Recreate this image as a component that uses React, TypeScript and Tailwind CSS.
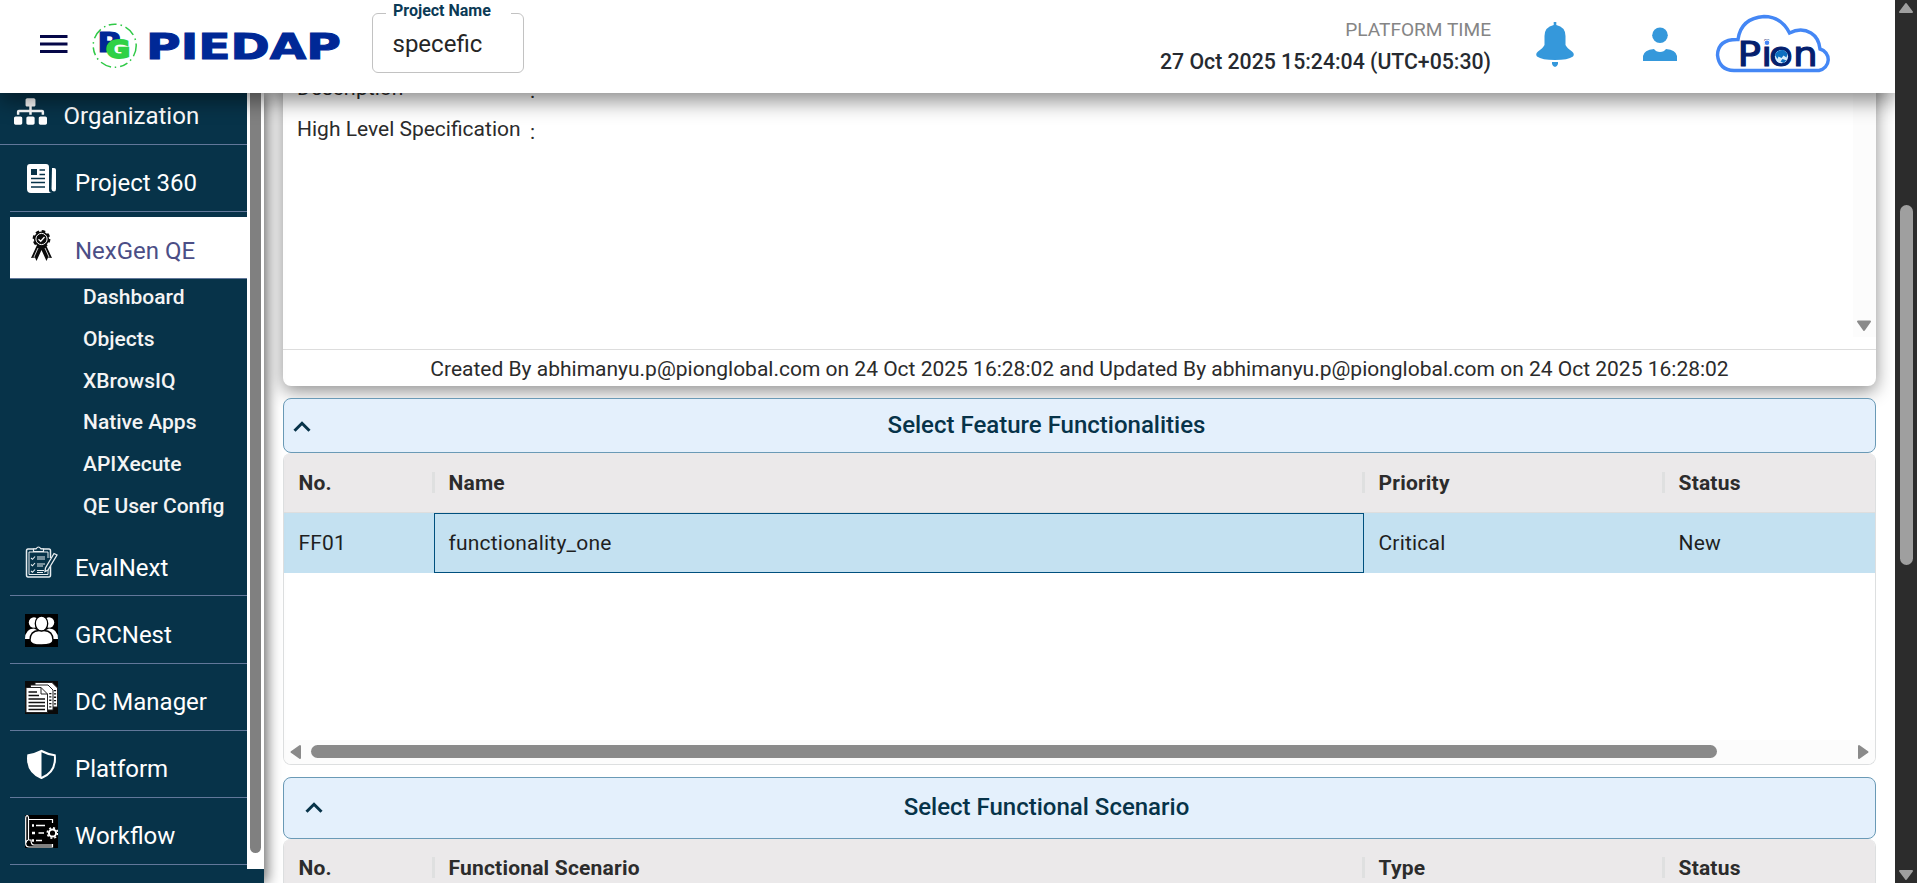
import React from "react";
import { FaSitemap } from "react-icons/fa";

function PiedapLogo() {
  return (
    <svg width="250" height="46" viewBox="0 0 250 46" className="ml-6 shrink-0">
      <circle cx="22.7" cy="22.7" r="21.5" fill="none" stroke="#2fc946" strokeWidth="1.5" strokeDasharray="11 4 1.5 3.5 8 4 1.5 3.8" />
      <text x="5.5" y="29" fontFamily="DejaVu Sans" fontWeight="700" fontSize="26" fill="#002896" stroke="#002896" strokeWidth="1.2" textLength="23" lengthAdjust="spacingAndGlyphs">P</text>
      <text x="14" y="35.4" fontFamily="DejaVu Sans" fontWeight="700" fontSize="24" fill="#2fd146" stroke="#2fd146" strokeWidth="2" textLength="24" lengthAdjust="spacingAndGlyphs">G</text>
      <text x="54" y="35.8" fontFamily="DejaVu Sans" fontWeight="700" fontSize="35" fill="#002896" stroke="#002896" strokeWidth="1" textLength="195" lengthAdjust="spacingAndGlyphs">PIEDAP</text>
    </svg>
  );
}

function PionLogo() {
  return (
    <svg width="118" height="60" viewBox="0 0 118 60" className="shrink-0">
      <path d="M19 56.5 H104 A11 11 0 0 0 105 35 Q104 24 96 19 Q86 13 74.5 19 Q66 2.5 49 2.5 Q26 4 23 25.5 Q3 25 2.5 41 Q4 56 19 56.5 Z" fill="#fff" stroke="#4487f5" strokeWidth="3.4" />
      <text x="19.9 41 47.9 69" y="52.4" transform="scale(1.13 1)" fontFamily="DejaVu Sans" fontWeight="400" fontSize="34.5" fill="#04206e" stroke="#04206e" strokeWidth="1.1">Pion</text>
      <circle cx="52" cy="28.6" r="3.2" fill="#fff" />
      <circle cx="52" cy="28.8" r="2.3" fill="#4487f5" />
      <circle cx="66.5" cy="42.6" r="6.6" fill="#d8ecfa" />
      <path d="M60 41 Q62 35.5 68.5 36 L72.5 39.5 L71.5 43.5 L68.5 41.5 L66.5 44 L63.5 42.5 L62.5 45Z M67.5 45 L71.5 46.5 L68.5 49 L65.5 47.5Z" fill="#0d6fc0" />
    </svg>
  );
}

function NewsIcon() {
  return (
    <svg width="33" height="33" viewBox="0 0 33 33">
      <path d="M5 2 H21 Q24 2 24 5 V28 Q24 31 27 31 H6 Q2 31 2 27 V5 Q2 2 5 2Z" fill="#fff" />
      <path d="M27 6 H29 Q31 6 31 8 V27 Q31 29.5 29 29.5 Q26.5 29 26.5 27Z" fill="#fff" />
      <path d="M6 7 H12 V13 H6Z" fill="#073349" />
      <path d="M14.5 8 H20 M14.5 12.5 H20 M6 16.5 H20 M6 20.5 H20 M6 25 H20" stroke="#073349" strokeWidth="1.7" />
    </svg>
  );
}

function AwardIcon() {
  return (
    <svg width="33" height="33" viewBox="0 0 33 33">
      <path d="M12 16 L6 29 L10 28.5 L11.5 32 L16.5 21 L21.5 32 L23 28.5 L27 29 L21 16Z" fill="#0a0a0a" />
      <path d="M13 19 L9 28 M20 19 L24 28" stroke="#fff" strokeWidth="0.8" />
      <circle cx="16.5" cy="10" r="7.6" fill="#0a0a0a" stroke="#0a0a0a" strokeWidth="2.6" strokeDasharray="3.4 2.57" />
      <circle cx="16.5" cy="10" r="5.6" fill="none" stroke="#fff" strokeWidth="1" />
      <path d="M13.5 10.3 L15.7 12.3 L19.5 8" fill="none" stroke="#fff" strokeWidth="1.3" />
    </svg>
  );
}

function ChecklistIcon() {
  return (
    <svg width="33" height="33" viewBox="0 0 33 33" fill="none" stroke="#e8edf0">
      <path d="M25.5 12 V5 Q25.5 3 24 3 H3 Q1.5 3 1.5 5 V29 Q1.5 31 3 31 H24 Q25.5 31 25.5 29 V20" strokeWidth="1.5" />
      <path d="M23 12 V6 H4 V28.5 H23 V24" strokeWidth="1" />
      <path d="M8.5 5.5 V3 H11 Q13.5 -1 16 3 H18.5 V5.5Z" fill="#073349" strokeWidth="1.2" />
      <path d="M6 12 L7.5 13.3 L10 10.5 M6 18.5 L7.5 19.8 L10 17 M6 25 L7.5 26.3 L10 23.5 M12 11 H20 M12 13 H20 M12 18 H20 M12 20 H18 M12 24.5 H19 M12 26.5 H18" strokeWidth="1.1" />
      <path d="M29 7.5 L32 9 L23 24 L20 25.5 L20.5 22Z" fill="#073349" strokeWidth="1.3" />
    </svg>
  );
}

function PeopleIcon() {
  return (
    <svg width="33" height="33" viewBox="0 0 33 33">
      <rect width="33" height="33" fill="#000" />
      <g fill="#fff">
        <circle cx="9" cy="8.5" r="5.2" />
        <circle cx="24" cy="8.5" r="5.2" />
        <path d="M0 25 Q0 15 9 14.5 L14 17 V25Z M33 25 Q33 15 24 14.5 L19 17 V25Z" />
      </g>
      <g fill="#fff" stroke="#000" strokeWidth="1.3">
        <path d="M5 26 Q5 17 14 16.5 H19 Q28 17 28 26 Q28 31 16.5 31 Q5 31 5 26Z" />
        <ellipse cx="16.5" cy="9.5" rx="6.2" ry="7.5" />
      </g>
    </svg>
  );
}

function DocumentsIcon() {
  return (
    <svg width="33" height="33" viewBox="0 0 33 33">
      <rect width="33" height="33" fill="#0a0a0a" />
      <path d="M10 1.5 H27 L32.5 7 V26 H10Z" fill="#fff" stroke="#222" />
      <path d="M5.5 4 H23 L28 9 V29 H5.5Z" fill="#fff" stroke="#222" />
      <path d="M1 6.5 H16 L22.5 13 V31.5 H1Z" fill="#fff" stroke="#222" />
      <path d="M16 6.5 V13 H22.5" fill="none" stroke="#222" />
      <path d="M3.5 11 H12 M3.5 14.5 H14 M3.5 18 H20 M3.5 21.5 H20 M3.5 25 H20 M3.5 28.5 H20" stroke="#111" strokeWidth="1.3" />
      <path d="M25.3 12 V27 M30 9 V25" stroke="#111" strokeWidth="2.2" strokeDasharray="1.3 2" />
    </svg>
  );
}

function ShieldIcon() {
  return (
    <svg width="33" height="33" viewBox="0 0 33 33">
      <path d="M16.5 3 Q22 6 29.8 7.3 Q31.5 24 16.5 30 Q1.5 24 3.2 7.3 Q11 6 16.5 3Z" fill="none" stroke="#fff" strokeWidth="2" />
      <path d="M16.5 3 V30 Q1.5 24 3.2 7.3 Q11 6 16.5 3Z" fill="#fff" />
    </svg>
  );
}

function WorkflowIcon() {
  return (
    <svg width="33" height="33" viewBox="0 0 33 33" fill="none" stroke="#fff">
      <rect width="33" height="33" fill="#000" stroke="none" />
      <path d="M3.5 25 V3 Q3.5 0.7 2 0.7 Q0.7 1 0.7 3 V29 Q1 32 4 32 H27.5 V29 M3.5 25 Q1 25.5 1 28 M4 25 H6 Q6 30 9 30 H27 M4 4.5 H27.5 V8" strokeWidth="1.2" />
      <path d="M11 10.5 H20 M13.5 18 H19 M11 25.5 H17" strokeWidth="1.7" />
      <path d="M7 10.5 H9 M7 18 H10 M7 25.5 H9" strokeWidth="2.6" />
      <circle cx="27.5" cy="18" r="3.6" strokeWidth="2" />
      <circle cx="27.5" cy="18" r="5.2" strokeWidth="1.6" strokeDasharray="2 2.08" />
    </svg>
  );
}

function NavItem({ icon, label, active = false }: { icon: React.ReactNode; label: string; active?: boolean }) {
  return (
    <div className="ml-2.5 flex h-[67.2px] shrink-0 flex-col justify-end border-b border-[#62789a]">
      <div className={active ? "flex h-[61px] bg-white pl-[15px] text-[#4b4e86]" : "flex h-[61px] pl-[15px] text-white"}>
        <div className="mt-[12px] flex h-[33px] w-[33px] items-center justify-center">{icon}</div>
        <div className="ml-[17px] mt-[17.3px] text-[24px] leading-[32px]">{label}</div>
      </div>
    </div>
  );
}

const subItems = ["Dashboard", "Objects", "XBrowsIQ", "Native Apps", "APIXecute", "QE User Config"];

function Sidebar() {
  return (
    <aside className="z-10 flex w-[264px] shrink-0 flex-col bg-[#073349] shadow-[3px_0_13px_rgba(0,0,0,0.6)]">
      <div className="flex h-[776px] shrink-0">
        <nav className="flex w-[247px] flex-col">
          <div className="flex h-[52px] shrink-0 border-b border-[#62789a] pl-[14px] text-white">
            <FaSitemap className="mt-[2px]" size={33} />
            <span className="ml-[16.5px] mt-[7px] text-[24px] leading-[32px]">Organization</span>
          </div>
          <NavItem icon={<NewsIcon />} label="Project 360" />
          <NavItem icon={<AwardIcon />} label="NexGen QE" active />
          <div className="flex h-[249.8px] shrink-0 flex-col pl-[83px]">
            {subItems.map((s) => (
              <div key={s} className="h-[41.7px] shrink-0 pt-[3px] text-[21px] font-medium leading-[30px] text-[#f4f4f4]">{s}</div>
            ))}
          </div>
          <NavItem icon={<ChecklistIcon />} label="EvalNext" />
          <NavItem icon={<PeopleIcon />} label="GRCNest" />
          <NavItem icon={<DocumentsIcon />} label="DC Manager" />
          <NavItem icon={<ShieldIcon />} label="Platform" />
          <NavItem icon={<WorkflowIcon />} label="Workflow" />
        </nav>
        <div className="w-[17px] bg-white pl-[3px]">
          <div className="h-[760px] w-[11px] rounded-b-full bg-[#808080]" />
        </div>
      </div>
    </aside>
  );
}

function SectionBar({ title, tall = false }: { title: string; tall?: boolean }) {
  return (
    <div className={tall
      ? "mt-3 flex h-[62px] shrink-0 items-center rounded-lg border border-[#6a9ab6] bg-[#e4f0fc] pb-[3px] pl-[21px] pr-[21px]"
      : "mt-3 flex h-[55px] shrink-0 items-center rounded-lg border border-[#6a9ab6] bg-[#e4f0fc] pl-[9px] pr-[9px]"}>
      <svg width="18" height="12" viewBox="0 0 18 12" className="mt-[2px] shrink-0">
        <path d="M1.5 9.8 L9 2.3 L16.5 9.8" fill="none" stroke="#073349" strokeWidth="3" />
      </svg>
      <div className={tall
        ? "flex-1 pr-[84px] pt-[1px] text-center text-[24px] font-medium leading-[30px] text-[#073349]"
        : "flex-1 pb-[1px] pr-[84px] text-center text-[24px] font-medium leading-[30px] text-[#073349]"}>{title}</div>
    </div>
  );
}

function HeaderRow({ cells }: { cells: string[] }) {
  return (
    <div className="grid h-[60px] shrink-0 grid-cols-[150px_930px_300px_1fr] items-center border-b border-[#dedede] bg-[#ebe9ea] text-[21px] font-bold tracking-[0.2px] text-[#2c2c2c]">
      {cells.map((c, i) => (
        <div key={c} className="flex h-[22px] items-center justify-between pl-[14.5px]">
          <span className="pt-[2px]">{c}</span>
          {i < 3 && <span className="-mr-[1px] h-[21px] w-[3px] bg-[#dfe0e0]" />}
        </div>
      ))}
    </div>
  );
}

function Main() {
  return (
    <main className="flex min-w-0 flex-1 flex-col overflow-hidden bg-white pl-[19px] pr-[19px]">
      <section className="-mt-5 flex h-[313px] shrink-0 flex-col rounded-lg bg-white text-[21px] text-[#2b2b2b] shadow-[0_5px_18px_rgba(0,0,0,0.45)]">
        <div className="flex h-[277px] shrink-0 border-b border-[#dddddd]">
          <div className="flex-1 pl-[14px]">
            <div className="flex h-[41px] leading-[30px]">
              <span className="w-[233px]">Description</span>
              <span className="mt-[3px]">:</span>
            </div>
            <div className="flex h-[40px] leading-[30px]">
              <span className="w-[233px]">High Level Specification</span>
              <span className="mt-[3px]">:</span>
            </div>
          </div>
          <div className="mb-3 flex w-[23px] flex-col items-center justify-end bg-[#fcfcfc] pb-[5px] pr-[1px]">
            <svg width="16" height="12" viewBox="0 0 16 12">
              <path d="M2 1.5 H14 L8 10Z" fill="#8a8a8a" stroke="#8a8a8a" strokeWidth="2" strokeLinejoin="round" />
            </svg>
          </div>
        </div>
        <div className="flex flex-1 items-center justify-center pt-[4px]">
          <span>Created By abhimanyu.p@pionglobal.com on 24 Oct 2025 16:28:02 and Updated By abhimanyu.p@pionglobal.com on 24 Oct 2025 16:28:02</span>
        </div>
      </section>

      <SectionBar title="Select Feature Functionalities" />
      <section className="flex h-[312px] shrink-0 flex-col overflow-hidden rounded-lg border border-t-0 border-[#dddfe0]">
        <HeaderRow cells={["No.", "Name", "Priority", "Status"]} />
        <div className="grid h-[60px] shrink-0 grid-cols-[150px_930px_300px_1fr] bg-[#c4e1f1] text-[21px] leading-[60px] tracking-[0.2px] text-[#1f1f1f]">
          <span className="pl-[14.5px]">FF01</span>
          <span className="border border-[#00507e] pl-[13.5px] leading-[58px]">functionality_one</span>
          <span className="pl-[14.5px]">Critical</span>
          <span className="pl-[14.5px]">New</span>
        </div>
        <div className="flex-1" />
        <div className="flex h-[24px] shrink-0 items-center bg-[#fcfcfc] pb-[1px] pl-[6px] pr-[6px]">
          <svg width="12" height="16" viewBox="0 0 12 16">
            <path d="M10 2 V14 L1.5 8Z" fill="#8a8a8a" stroke="#8a8a8a" strokeWidth="2" strokeLinejoin="round" />
          </svg>
          <div className="ml-[9px] h-[13px] w-[1406px] rounded-full bg-[#8a8a8a]" />
          <div className="flex-1" />
          <svg width="12" height="16" viewBox="0 0 12 16">
            <path d="M2 2 V14 L10.5 8Z" fill="#8a8a8a" stroke="#8a8a8a" strokeWidth="2" strokeLinejoin="round" />
          </svg>
        </div>
      </section>

      <SectionBar title="Select Functional Scenario" tall />
      <section className="flex h-[200px] shrink-0 flex-col overflow-hidden rounded-lg border border-t-0 border-[#dddfe0]">
        <div className="-mt-[1px]">
          <HeaderRow cells={["No.", "Functional Scenario", "Type", "Status"]} />
        </div>
      </section>
    </main>
  );
}

function TopBar() {
  return (
    <header className="z-20 flex h-[93px] shrink-0 items-start bg-white shadow-[0_8px_20px_rgba(0,0,0,0.45)]">
      <svg width="28" height="20" viewBox="0 0 28 20" className="ml-10 mt-[34px] shrink-0">
        <path d="M0 2.5 H27.5 M0 10 H27.5 M0 17.5 H27.5" stroke="#050748" strokeWidth="3" />
      </svg>
      <div className="mt-[23px] flex"><PiedapLogo /></div>
      <fieldset className="-mt-[1px] ml-[30px] h-[74px] w-[152px] rounded-[6px] border border-[#c2c2c2] pl-[13px]">
        <legend className="h-[28px] w-[125px] pl-[7px] text-[16px] font-bold leading-[23px] text-[#0b3a55]">Project Name</legend>
        <div className="pl-[6.5px] pt-[1px] text-[24px] leading-[32px] text-[#262626]">specefic</div>
      </fieldset>
      <div className="flex-1" />
      <div className="mt-[16px] flex flex-col items-end">
        <span className="text-[19.1px] leading-[28px] text-[#858585]">PLATFORM TIME</span>
        <span className="mt-[3px] text-[21.25px] font-medium leading-[30px] text-[#262a30]">27 Oct 2025 15:24:04 (UTC+05:30)</span>
      </div>
      <svg width="40" height="46" viewBox="0 0 40 46" className="ml-[44px] mt-[22px] shrink-0" fill="#3598db">
        <path d="M18.7 0 H21.3 V3 Q30.5 5 30.5 14 V23 Q32 26 37 29.5 Q40 32 38 34.5 Q33 38 20 38 Q7 38 2 34.5 Q0 32 3 29.5 Q8 26 9.5 23 V14 Q9.5 5 18.7 3Z" />
        <path d="M17 40 H23 V42 Q22 45 20 45 Q18 45 17 42Z" />
      </svg>
      <svg width="36" height="36" viewBox="0 0 36 36" className="ml-[67px] mt-[27px] shrink-0" fill="#3598db">
        <circle cx="18" cy="8.2" r="7.8" />
        <path d="M1 34 V29 Q2 23 12 22 Q14 25 18 25 Q22 25 24 22 Q34 23 35 29 V34Z" />
      </svg>
      <div className="ml-[37px] mr-[62px] mt-[14px] flex"><PionLogo /></div>
    </header>
  );
}

export default function App() {
  return (
    <div className="flex h-[883px] w-[1917px] overflow-hidden bg-white font-['Roboto',sans-serif]">
      <div className="flex min-w-0 flex-1 flex-col overflow-hidden">
        <TopBar />
        <div className="flex min-h-0 flex-1">
          <Sidebar />
          <Main />
        </div>
      </div>
      <div className="flex w-[22px] shrink-0 flex-col items-center bg-[#2c2c2c] pb-[2px] pt-[2px]">
        <svg width="16" height="12" viewBox="0 0 16 12">
          <path d="M2 10 H14 L8 2Z" fill="#9f9f9f" stroke="#9f9f9f" strokeWidth="2" strokeLinejoin="round" />
        </svg>
        <div className="mt-[191px] h-[360px] w-[13px] rounded-full bg-[#9f9f9f]" />
        <div className="flex-1" />
        <svg width="16" height="12" viewBox="0 0 16 12">
          <path d="M2 2 H14 L8 10Z" fill="#9f9f9f" stroke="#9f9f9f" strokeWidth="2" strokeLinejoin="round" />
        </svg>
      </div>
    </div>
  );
}
